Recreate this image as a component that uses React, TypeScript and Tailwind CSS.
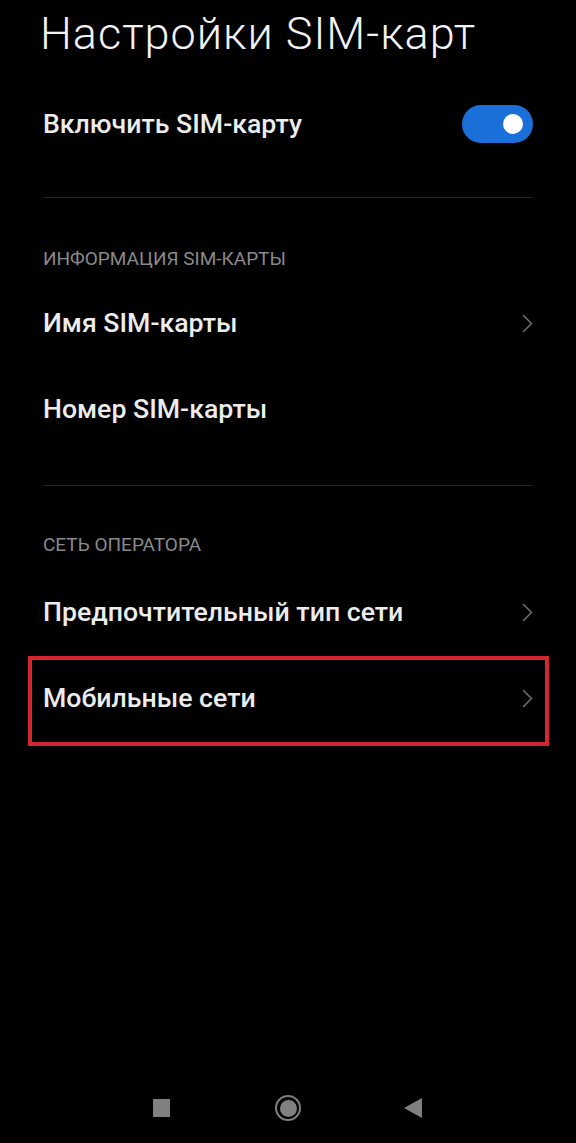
import React from "react";

const Chevron = () => (
  <svg width="11" height="19" viewBox="0 0 11 19" fill="none" className="ml-auto shrink-0 translate-x-[2px]">
    <polyline points="1.5,1.5 9.5,9.5 1.5,17.5" stroke="#6e6e6e" strokeWidth="1.6" strokeLinecap="round" strokeLinejoin="round" />
  </svg>
);

const Row = ({ label, chevron, children }: { label: string; chevron?: boolean; children?: React.ReactNode }) => (
  <div className="relative flex h-[86px] items-center justify-between pl-[43px] pr-[45px]">
    <span className="text-[26.7px] font-medium leading-none text-[#ececec]">{label}</span>
    {chevron && <Chevron />}
    {children}
  </div>
);

const SectionHeader = ({ text }: { text: string }) => (
  <div className="flex h-[24px] items-center px-[43px] text-[19px] leading-none text-[#8a8a8a]">{text}</div>
);

const Divider = () => <div className="mx-[43px] h-px bg-[#262626]" />;

export default function App() {
  return (
    <div className="flex min-h-[1143px] w-[576px] flex-col bg-black font-['Roboto',sans-serif]">
      {/* header */}
      <div className="flex h-[67px] items-center pl-[40px]">
        <h1 className="text-[45px] font-light leading-none tracking-[1px] text-[#f2f2f2]">Настройки SIM-карт</h1>
      </div>

      <div className="mt-[14px]">
        <Row label="Включить SIM-карту">
          <div className="-mr-[2px] flex h-[38px] w-[71px] items-center justify-end rounded-full bg-[#1a6fd8] pr-[10px]">
            <div className="h-[20px] w-[20px] rounded-full bg-white" />
          </div>
        </Row>
      </div>

      <div className="mt-[30px]">
        <Divider />
      </div>

      <div className="mt-[48px]">
        <SectionHeader text="ИНФОРМАЦИЯ SIM-КАРТЫ" />
      </div>

      <div className="mt-[10px]">
        <Row label="Имя SIM-карты" chevron />
        <Row label="Номер SIM-карты" />
      </div>

      <div className="mt-[33px]">
        <Divider />
      </div>

      <div className="mt-[46px]">
        <SectionHeader text="СЕТЬ ОПЕРАТОРА" />
      </div>

      <div className="mt-[13px]">
        <Row label="Предпочтительный тип сети" chevron />
        <Row label="Мобильные сети" chevron>
          {/* highlight frame */}
          <div className="pointer-events-none absolute left-[28px] top-px h-[90px] w-[521px] border-[4px] border-[#d4262f]" />
        </Row>
      </div>

      <div className="flex-1" />

      {/* navigation bar */}
      <div className="flex h-[70px] items-center">
        <div className="ml-[153px] h-[18px] w-[17px] bg-[#808080]" />
        <div className="ml-[105px] flex h-[26px] w-[26px] items-center justify-center rounded-full border-[2.5px] border-[#808080]">
          <div className="h-[17px] w-[17px] rounded-full bg-[#808080]" />
        </div>
        <svg width="18" height="20" viewBox="0 0 18 20" className="ml-[103px]">
          <polygon points="18,0 18,20 0,10" fill="#808080" />
        </svg>
      </div>
    </div>
  );
}
